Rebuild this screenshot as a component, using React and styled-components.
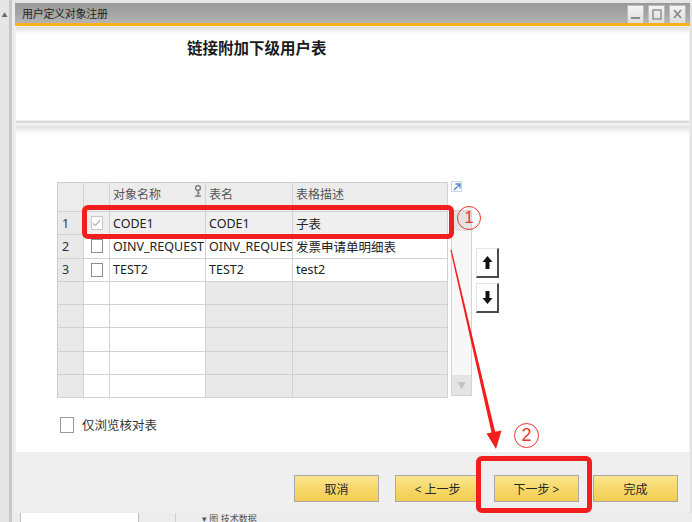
import React from 'react'
import styled, { createGlobalStyle } from 'styled-components'

const GlobalStyle = createGlobalStyle`
  html, body {
    margin: 0;
    padding: 0;
  }
  body {
    width: 692px;
    height: 522px;
    overflow: hidden;
    background: #e8e8e8;
    font-family: "Noto Sans", "Noto Sans CJK SC", sans-serif;
  }
`;

const Page = styled.div`
  position: relative;
  display: flex;
  width: 692px;
  height: 522px;
`;

const Rail = styled.div`
  width: 9px;
  background: #e6e6e6;
  border-right: 3px solid #c8c8c8;
  display: flex;
  flex-direction: column;
  align-items: center;
  padding-top: 12px;
  color: #666;
  font-size: 6px;
  line-height: 6px;
`;

const Main = styled.div`
  flex: 1;
  display: flex;
  flex-direction: column;
  padding-top: 3px;
  background: #e6e6e6;
`;

const Window = styled.div`
  height: 510px;
  display: flex;
  flex-direction: column;
  background: #f0f0f0;
  border-left: 3px solid #ededed;
  border-right: 2px solid #e2e2e2;
`;

const TitleBar = styled.div`
  height: 20px;
  display: flex;
  align-items: center;
  justify-content: space-between;
  padding: 0 4px 0 7px;
  background: linear-gradient(180deg, #999999 0%, #a6a6a6 55%, #b4b4b4 100%);
`;

const TitleText = styled.span`
  font-size: 11px;
  color: #1f1f1f;
  letter-spacing: -0.3px;
`;

const WinButtons = styled.div`
  display: flex;
  gap: 4px;
  align-items: center;
  padding-top: 2px;
`;

const WinButton = styled.div`
  width: 15px;
  height: 17px;
  background: linear-gradient(180deg, #f4f4f4, #dcdcdc);
  border: 1px solid #bdbdbd;
  display: flex;
  align-items: center;
  justify-content: center;
`;

const OrangeBar = styled.div`
  height: 3px;
  background: #f6b41a;
`;

const Header = styled.div`
  height: 93px;
  margin: 1px 1px 0;
  background: #fff;
  box-shadow: inset 0 7px 6px -5px #cfcfcf;
  padding: 10px 0 0 171px;
  box-sizing: border-box;
`;

const HeaderTitle = styled.div`
  font-size: 15.5px;
  font-weight: 700;
  color: #1a1a1a;
  line-height: 22px;
`;

const Divider = styled.div`
  height: 2px;
  margin: 1px 1px 3px;
  background: #dadada;
`;

const Content = styled.div`
  flex: 1;
  margin: 0 1px;
  background: #fff;
  box-shadow: inset 0 8px 7px -5px #d8d8d8;
  padding: 56px 0 0 41px;
`;

const TableArea = styled.div`
  display: flex;
  align-items: flex-start;
`;

const Grid = styled.div`
  display: grid;
  grid-template-columns: 26px 26px 96px 87px 155px;
  grid-template-rows: 29px repeat(8, 23.3px);
  border: 1px solid #cdcdcd;
  border-right: none;
  border-bottom: none;
`;

const toneColor = {
  gray: '#e9e9e9',
  head: '#ececec',
  white: '#ffffff',
  sel: '#efefef',
};

const Cell = styled.div`
  background: ${({ $tone }) => toneColor[$tone] || '#fff'};
  border-right: 1px solid #d2d2d2;
  border-bottom: 1px solid #d2d2d2;
  display: flex;
  align-items: center;
  justify-content: ${({ $center }) => ($center ? 'center' : 'flex-start')};
  padding-left: ${({ $center }) => ($center ? '0' : '3px')};
  font-size: 12.5px;
  color: #222;
  white-space: nowrap;
  overflow: hidden;
  box-sizing: border-box;
`;

const HeadCell = styled(Cell)`
  color: #555;
  font-size: 12px;
  align-items: flex-start;
  padding-top: 2px;
  justify-content: space-between;
  padding-right: 3px;
`;

const RowNum = styled(Cell)`
  padding-left: 4px;
  color: #333;
`;

const Check = styled.span`
  width: 12px;
  height: 14px;
  border: 1px solid ${({ $disabled }) => ($disabled ? '#c8c8c8' : '#8c8c8c')};
  background: #fff;
  display: flex;
  align-items: center;
  justify-content: center;
  box-sizing: border-box;
`;

const OptionCheck = styled(Check)`
  width: 14px;
  height: 16px;
  border-color: #999;
`;

const ScrollCol = styled.div`
  width: 22px;
  margin-left: 3px;
  display: flex;
  flex-direction: column;
  align-items: flex-start;
`;

const ExpandIcon = styled.div`
  width: 11px;
  height: 11px;
  margin-top: -1px;
  border: 1px solid #c5d6ea;
  box-sizing: border-box;
  display: flex;
  align-items: center;
  justify-content: center;
  margin-bottom: 18px;
`;

const ScrollTrack = styled.div`
  width: 21px;
  height: 186px;
  border: 1px solid #d4d4d4;
  background: #f7f7f7;
  box-sizing: border-box;
  display: flex;
  flex-direction: column;
  justify-content: space-between;
`;

const ScrollBtn = styled.div`
  height: 20px;
  background: #e4e4e4;
  display: flex;
  align-items: center;
  justify-content: center;
  color: #c4c4c4;
  font-size: 9px;
`;

const MoveCol = styled.div`
  margin: 66px 0 0 3px;
  display: flex;
  flex-direction: column;
  gap: 5px;
`;

const MoveButton = styled.div`
  width: 23px;
  height: 30px;
  background: #fff;
  border-top: 1px solid #e4e4e4;
  border-left: 1px solid #e4e4e4;
  border-right: 2px solid #4a4a4a;
  border-bottom: 2px solid #4a4a4a;
  box-sizing: border-box;
  display: flex;
  align-items: center;
  justify-content: center;
`;

const OptionRow = styled.label`
  display: flex;
  align-items: center;
  gap: 8px;
  margin: 17px 0 0 3px;
  font-size: 12.5px;
  color: #333;
`;

const Footer = styled.div`
  height: 61px;
  background: #efefef;
  display: flex;
  justify-content: flex-end;
  align-items: flex-start;
  padding: 23px 12px 0 0;
  box-sizing: border-box;
  gap: 14px;
`;

const WizardButton = styled.button`
  width: 85px;
  height: 27px;
  margin-right: ${({ $extra }) => ($extra ? '2px' : '0')};
  background: linear-gradient(180deg, #fbe590 0%, #f6d96a 50%, #f2cd52 100%);
  border: 1px solid #a8a8a8;
  font-family: "Noto Sans", "Noto Sans CJK SC", sans-serif;
  font-size: 12px;
  color: #262626;
  padding: 0;
`;

const BottomStrip = styled.div`
  flex: 1;
  display: flex;
  background: #ececec;
  overflow: hidden;
`;

const StripPanel = styled.div`
  width: 117px;
  margin-left: 8px;
  background: #fff;
  border-left: 1px solid #bdbdbd;
  border-right: 1px solid #bdbdbd;
`;

const StripText = styled.div`
  margin-left: 36px;
  padding-top: 1px;
  font-size: 9px;
  color: #555;
  line-height: 9px;
  border-left: 1px solid #d0d0d0;
  padding-left: 26px;
`;

const RedBox = styled.div`
  position: absolute;
  left: ${({ $x }) => $x}px;
  top: ${({ $y }) => $y}px;
  width: ${({ $w }) => $w}px;
  height: ${({ $h }) => $h}px;
  border: 5px solid #f21d1d;
  border-radius: 6px;
  box-sizing: border-box;
  pointer-events: none;
`;

const CircleMark = styled.div`
  position: absolute;
  left: ${({ $x }) => $x}px;
  top: ${({ $y }) => $y}px;
  width: ${({ $d }) => $d}px;
  height: ${({ $d }) => $d}px;
  border: 1.3px solid #e8362c;
  border-radius: 50%;
  box-sizing: border-box;
  display: flex;
  align-items: center;
  justify-content: center;
  color: #e8362c;
  font-family: "Liberation Sans", sans-serif;
  font-size: ${({ $d }) => Math.round($d * 0.72)}px;
  font-weight: 300;
`;

const ArrowLayer = styled.svg`
  position: absolute;
  left: 0;
  top: 0;
  pointer-events: none;
`;

const rows = [
  { n: 1, checked: true, name: 'CODE1', table: 'CODE1', desc: '子表', sel: true },
  { n: 2, name: 'OINV_REQUEST', table: 'OINV_REQUES', desc: '发票申请单明细表' },
  { n: 3, name: 'TEST2', table: 'TEST2', desc: 'test2' },
  {}, {}, {}, {}, {},
];

const KeyIcon = () => (
  <svg width="8" height="12" viewBox="0 0 8 12">
    <circle cx="4" cy="3" r="2.4" fill="none" stroke="#6f6f6f" strokeWidth="1.2" />
    <path d="M4 5.4V10.5M4 8h1.8M1 11.2h6" stroke="#6f6f6f" strokeWidth="1.2" fill="none" />
  </svg>
);

const CheckMark = () => (
  <svg width="9" height="8" viewBox="0 0 9 8">
    <path d="M1 4.2l2.4 2.4L8 1" stroke="#b9b9b9" strokeWidth="1.3" fill="none" />
  </svg>
);

const ArrowUp = () => (
  <svg width="11" height="13" viewBox="0 0 11 13">
    <path d="M5.5 0L0.5 6h3v7h4V6h3z" fill="#111" />
  </svg>
);

const ArrowDown = () => (
  <svg width="11" height="13" viewBox="0 0 11 13">
    <path d="M5.5 13L0.5 7h3V0h4v7h3z" fill="#111" />
  </svg>
);

const DataGrid = () => (
  <Grid>
    <HeadCell $tone="head" />
    <HeadCell $tone="head" />
    <HeadCell $tone="head">对象名称<KeyIcon /></HeadCell>
    <HeadCell $tone="head">表名</HeadCell>
    <HeadCell $tone="head">表格描述</HeadCell>
    {rows.map((r, i) => {
      const filled = r.n !== undefined;
      const tone = r.sel ? 'sel' : 'white';
      return (
        <React.Fragment key={i}>
          <RowNum $tone="gray">{r.n}</RowNum>
          <Cell $tone={filled ? tone : 'white'} $center>
            {filled && (
              <Check $disabled={r.checked}>{r.checked && <CheckMark />}</Check>
            )}
          </Cell>
          <Cell $tone={filled ? tone : 'white'}>{r.name}</Cell>
          <Cell $tone={filled ? tone : 'gray'}>{r.table}</Cell>
          <Cell $tone={filled ? tone : 'gray'}>{r.desc}</Cell>
        </React.Fragment>
      );
    })}
  </Grid>
);

const App = () => {
  return (
    <Page>
      <GlobalStyle />
      <Rail>▲</Rail>
      <Main>
        <Window>
          <TitleBar>
            <TitleText>用户定义对象注册</TitleText>
            <WinButtons>
              <WinButton>
                <svg width="9" height="11" viewBox="0 0 9 11">
                  <rect x="0" y="8" width="9" height="2" fill="#8a8a8a" />
                </svg>
              </WinButton>
              <WinButton>
                <svg width="10" height="11" viewBox="0 0 10 11">
                  <rect x="1" y="1" width="8" height="9" fill="none" stroke="#8a8a8a" strokeWidth="1.4" />
                </svg>
              </WinButton>
              <WinButton>
                <svg width="9" height="10" viewBox="0 0 9 10">
                  <path d="M1 1l7 8M8 1l-7 8" stroke="#8a8a8a" strokeWidth="1.8" />
                </svg>
              </WinButton>
            </WinButtons>
          </TitleBar>
          <OrangeBar />
          <Header>
            <HeaderTitle>链接附加下级用户表</HeaderTitle>
          </Header>
          <Divider />
          <Content>
            <TableArea>
              <DataGrid />
              <ScrollCol>
                <ExpandIcon>
                  <svg width="8" height="8" viewBox="0 0 8 8">
                    <path d="M1 7L7 1M2.5 1H7V5.5" stroke="#4f86c6" strokeWidth="1.3" fill="none" />
                  </svg>
                </ExpandIcon>
                <ScrollTrack>
                  <ScrollBtn />
                  <ScrollBtn>▼</ScrollBtn>
                </ScrollTrack>
              </ScrollCol>
              <MoveCol>
                <MoveButton><ArrowUp /></MoveButton>
                <MoveButton><ArrowDown /></MoveButton>
              </MoveCol>
            </TableArea>
            <OptionRow>
              <OptionCheck />
              仅浏览核对表
            </OptionRow>
          </Content>
          <Footer>
            <WizardButton $extra>取消</WizardButton>
            <WizardButton>&lt; 上一步</WizardButton>
            <WizardButton>下一步 &gt;</WizardButton>
            <WizardButton>完成</WizardButton>
          </Footer>
        </Window>
        <BottomStrip>
          <StripPanel />
          <StripText>▾ 图 技术数据</StripText>
        </BottomStrip>
      </Main>

      <RedBox $x={82} $y={205} $w={372} $h={34} />
      <RedBox $x={476} $y={456} $w={116} $h={57} />
      <CircleMark $x={457} $y={206} $d={24}>1</CircleMark>
      <CircleMark $x={514} $y={423} $d={25}>2</CircleMark>
      <ArrowLayer width="692" height="522" viewBox="0 0 692 522">
        <polygon points="450.4,250.1 451.6,249.9 495.8,434.6 492.2,435.4" fill="#f21d1d" />
        <polygon points="486.5,433.5 501.5,430.5 496,449" fill="#f21d1d" />
      </ArrowLayer>
    </Page>
  )
}

export default App
